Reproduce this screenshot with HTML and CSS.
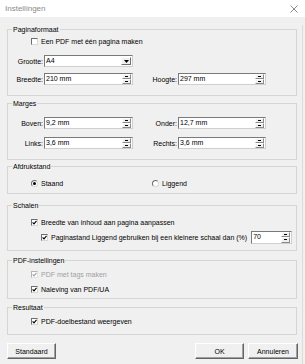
FILE: index.html
```
<!DOCTYPE html>
<html lang="nl">
<head>
    <meta charset="UTF-8">
    <meta name="viewport" content="width=device-width, initial-scale=1.0">
    <title>Instellingen</title>
    <link rel="stylesheet" href="styles.css">
</head>
<body>
    <div class="titlebar">
        <span class="title">Instellingen</span>
        <svg class="close" width="8" height="8" viewBox="0 0 8 8"><path d="M0.5 0.5 L7.5 7.5 M7.5 0.5 L0.5 7.5" stroke="#8c8c8c" stroke-width="1" fill="none"/></svg>
    </div>
    <div class="dlg">
        <fieldset class="grp g1">
            <legend>Paginaformaat</legend>
            <div class="cbrow"><span class="cb"></span><span>Een PDF met één pagina maken</span></div>
            <div class="form g1form">
                <label>Grootte:</label>
                <div class="field"><span class="val">A4</span><span class="drop"><svg width="5" height="3" viewBox="0 0 5 3"><path d="M0 0 H5 L2.5 3 Z" fill="#000"/></svg></span></div>
                <span></span><span></span>
                <label>Breedte:</label>
                <div class="field"><span class="val">210 mm</span><span class="spin"><i></i><i></i></span></div>
                <label>Hoogte:</label>
                <div class="field"><span class="val">297 mm</span><span class="spin"><i></i><i></i></span></div>
            </div>
        </fieldset>

        <fieldset class="grp g2">
            <legend>Marges</legend>
            <div class="form g2form">
                <label>Boven:</label>
                <div class="field"><span class="val">9,2 mm</span><span class="spin"><i></i><i></i></span></div>
                <label>Onder:</label>
                <div class="field"><span class="val">12,7 mm</span><span class="spin"><i></i><i></i></span></div>
                <label>Links:</label>
                <div class="field"><span class="val">3,6 mm</span><span class="spin"><i></i><i></i></span></div>
                <label>Rechts:</label>
                <div class="field"><span class="val">3,6 mm</span><span class="spin"><i></i><i></i></span></div>
            </div>
        </fieldset>

        <fieldset class="grp g3">
            <legend>Afdrukstand</legend>
            <div class="radios">
                <div class="rbrow"><span class="rb on"></span><span>Staand</span></div>
                <div class="rbrow right"><span class="rb"></span><span>Liggend</span></div>
            </div>
        </fieldset>

        <fieldset class="grp g4">
            <legend>Schalen</legend>
            <div class="cbrow"><span class="cb on"></span><span>Breedte van inhoud aan pagina aanpassen</span></div>
            <div class="cbrow sub">
                <span class="cb on"></span><span>Paginastand Liggend gebruiken bij een kleinere schaal dan (%)</span>
                <div class="field small"><span class="val">70</span><span class="spin"><i></i><i></i></span></div>
            </div>
        </fieldset>

        <fieldset class="grp g5">
            <legend>PDF-instellingen</legend>
            <div class="cbrow off"><span class="cb on"></span><span>PDF met tags maken</span></div>
            <div class="cbrow second"><span class="cb on"></span><span>Naleving van PDF/UA</span></div>
        </fieldset>

        <fieldset class="grp g6">
            <legend>Resultaat</legend>
            <div class="cbrow"><span class="cb on"></span><span>PDF-doelbestand weergeven</span></div>
        </fieldset>

        <div class="buttons">
            <button class="btn">Standaard</button>
            <button class="btn ok">OK</button>
            <button class="btn wide">Annuleren</button>
        </div>
    </div>
</body>
</html>
```

FILE: styles.css
```
*{
    box-sizing: border-box;
}
body{
    margin: 0;
    background-color: #f0f0f0;
    font-family: "Liberation Sans", Arial, sans-serif;
    font-size: 7px;
    color: #000;
}
.titlebar{
    height: 17px;
    background-color: #fff;
    display: flex;
    align-items: center;
    justify-content: space-between;
    padding: 0 7px 0 5px;
}
.title{
    font-size: 8px;
    color: #8a8a8a;
}
.dlg{
    padding-left: 7px;
    width: 303px;
    border-right: 1px solid #dcdcdc;
    height: 347px;
}
.grp{
    width: 290px;
    margin: 0;
    padding: 0;
    min-width: 0;
    border: 1px solid #d5d5d5;
}
.grp legend{
    margin-left: 4px;
    padding: 0 1px;
    line-height: 9px;
}
.g1{ margin-top: 8px; padding: 3px 0 10px; }
.g2{ margin-top: 3px; padding: 9px 0 10px; }
.g3{ margin-top: 2px; padding: 8px 0 5px; }
.g4{ margin-top: 7px; padding: 8px 0 7px; }
.g5{ margin-top: 5px; padding: 5px 0 4px; }
.g6{ margin-top: 4px; padding: 5px 0 8px; }

.cbrow{
    display: flex;
    align-items: center;
    height: 9px;
    padding-left: 23px;
    gap: 3px;
}
.cbrow.sub{
    padding-left: 33px;
    height: 12px;
    margin-top: 4px;
}
.cbrow.second{
    margin-top: 6px;
}
.cbrow.off{
    color: #a0a0a0;
}
.cb{
    width: 7px;
    height: 7px;
    background-color: #fff;
    border: 1px solid;
    border-color: #6e6e6e #d8d8d8 #d8d8d8 #6e6e6e;
    flex: none;
}
.cb.on{
    background-image: url("data:image/svg+xml,%3Csvg xmlns='http://www.w3.org/2000/svg' width='5' height='5' viewBox='0 0 5 5'%3E%3Cpath d='M0.6 2.4 L2 3.9 L4.5 0.8' stroke='%23000' stroke-width='1.1' fill='none'/%3E%3C/svg%3E");
    background-repeat: no-repeat;
}
.cbrow.off .cb.on{
    background-image: url("data:image/svg+xml,%3Csvg xmlns='http://www.w3.org/2000/svg' width='5' height='5' viewBox='0 0 5 5'%3E%3Cpath d='M0.6 2.4 L2 3.9 L4.5 0.8' stroke='%23a0a0a0' stroke-width='1.1' fill='none'/%3E%3C/svg%3E");
    border-color: #b4b4b4 #e4e4e4 #e4e4e4 #b4b4b4;
}

.form{
    display: grid;
    grid-template-columns: 35px 89px 43px 88px;
    grid-auto-rows: 12px;
    column-gap: 1px;
    align-items: center;
}
.g1form{
    margin-top: 9px;
    row-gap: 6px;
}
.g2form{
    row-gap: 8px;
}
.form label{
    text-align: right;
    white-space: nowrap;
}
.field{
    height: 12px;
    display: flex;
    align-items: stretch;
    background-color: #fff;
    border: 1px solid;
    border-color: #7a7a7a #cfcfcf #cfcfcf #7a7a7a;
}
.field.small{
    width: 41px;
    height: 13px;
    margin-left: 1px;
}
.val{
    flex: 1;
    padding-left: 1px;
    line-height: 9px;
}
.drop{
    width: 10px;
    margin: 1px;
    background-color: #f0f0f0;
    border: 1px solid;
    border-color: #fff #6e6e6e #6e6e6e #fff;
    display: flex;
    align-items: center;
    justify-content: center;
}
.spin{
    width: 9px;
    margin-right: 1px;
    display: flex;
    flex-direction: column;
    gap: 0;
}
.spin i{
    flex: 1;
    background-color: #f0f0f0;
    border: 1px solid;
    border-color: #fff #8a8a8a #8a8a8a #fff;
    position: relative;
}
.spin i::after{
    content: "";
    position: absolute;
    left: 2px;
    top: 1px;
    width: 3px;
    height: 1px;
    background-color: #000;
}

.radios{
    display: flex;
    height: 9px;
    padding-left: 23px;
}
.rbrow{
    display: flex;
    align-items: center;
    gap: 3px;
    width: 121px;
}
.rb{
    width: 7px;
    height: 7px;
    border-radius: 50%;
    background-color: #fff;
    border: 1px solid;
    border-color: #6e6e6e #d8d8d8 #d8d8d8 #6e6e6e;
    display: flex;
    align-items: center;
    justify-content: center;
}
.rb.on::after{
    content: "";
    width: 3px;
    height: 3px;
    border-radius: 50%;
    background-color: #000;
}

.buttons{
    margin-top: 8px;
    width: 291px;
    display: flex;
    gap: 4px;
}
.btn{
    width: 49px;
    height: 16px;
    padding: 0;
    font-family: inherit;
    font-size: 7px;
    color: #000;
    background-color: #f0f0f0;
    border: 1px solid;
    border-color: #fff #646464 #646464 #fff;
    box-shadow: inset -1px -1px #a0a0a0;
}
.btn.ok{
    margin-left: auto;
}
.btn.wide{
    width: 50px;
}
```
